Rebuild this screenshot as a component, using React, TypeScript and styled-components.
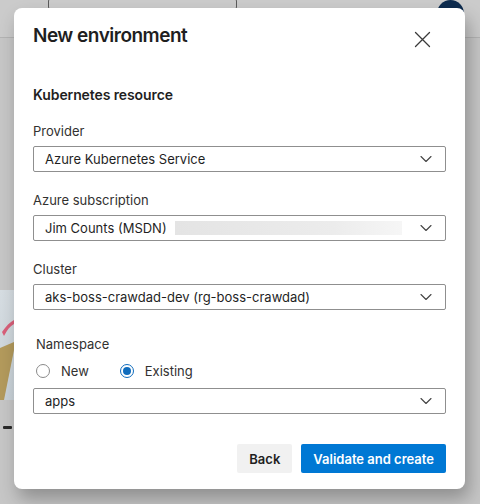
import React from 'react'
import styled, { createGlobalStyle } from 'styled-components'

const GlobalStyle = createGlobalStyle`
  html, body {
    margin: 0;
    padding: 0;
  }
  body {
    font-family: Inter, "Noto Sans", "Liberation Sans", sans-serif;
    color: #1f1f1f;
    -webkit-font-smoothing: antialiased;
  }
`

const Page = styled.div`
  position: relative;
  width: 480px;
  height: 504px;
  overflow: hidden;
  background: #c6c6c6;
`

const TopBar = styled.div`
  display: flex;
  align-items: flex-start;
  justify-content: space-between;
  height: 38px;
  padding: 0 16px 0 48px;
  box-sizing: border-box;
  background: #cbcbcb;
  border-bottom: 1px solid #b3b3b3;
`

const SearchBox = styled.div`
  width: 187px;
  height: 10px;
  margin-top: -2px;
  border: 1px solid #5a5a5a;
  border-radius: 3px;
`

const Avatar = styled.div`
  width: 27px;
  height: 27px;
  border-radius: 50%;
  background: #0d2b4e;
`

const Behind = styled.div`
  display: flex;
  flex-direction: column;
  padding-top: 252px;
  gap: 26px;
`

const Thumb = styled.div`
  width: 14px;
  height: 110px;
  background: linear-gradient(180deg, #d6dde2, #c9d2d8);
  overflow: hidden;
`

const ThumbCaption = styled.div`
  width: 9px;
  height: 3px;
  margin-left: 3px;
  background: #2a2a2a;
  border-radius: 1px;
`

const Dialog = styled.div`
  position: absolute;
  left: 14px;
  top: 8px;
  width: 451px;
  height: 481px;
  box-sizing: border-box;
  background: #fff;
  border-radius: 8px;
  box-shadow: 4px 10px 18px rgba(0, 0, 0, 0.28);
  padding: 14px 19px 16px 19px;
  display: flex;
  flex-direction: column;
`

const Header = styled.div`
  display: flex;
  align-items: flex-start;
  justify-content: space-between;
`

const Title = styled.h1`
  margin: 0;
  font-size: 19px;
  line-height: 28px;
  font-weight: 600;
  letter-spacing: -0.5px;
  color: #1f1f1f;
`

const CloseButton = styled.button`
  border: 0;
  background: none;
  padding: 0;
  margin: 9px 15px 0 0;
  width: 17px;
  height: 17px;
  display: flex;
  cursor: pointer;
`

const Section = styled.h2`
  margin: 35px 0 0 0;
  font-size: 14px;
  line-height: 20px;
  font-weight: 600;
  letter-spacing: -0.1px;
  color: #1f1f1f;
`

const Field = styled.div<{ $top?: number }>`
  display: flex;
  flex-direction: column;
  margin-top: ${({ $top }) => $top ?? 15}px;
`

const Label = styled.label<{ $indent?: number }>`
  font-size: 13px;
  line-height: 20px;
  color: #323130;
  margin: 0 0 5px ${({ $indent }) => $indent ?? 0}px;
`

const Select = styled.div`
  display: flex;
  align-items: center;
  height: 26px;
  box-sizing: border-box;
  border: 1px solid #8f8f8f;
  border-radius: 2px;
  padding: 0 13px 0 11px;
  font-size: 13px;
  color: #1f1f1f;
  gap: 4px;
`

const SelectText = styled.span`
  white-space: nowrap;
`

const Redacted = styled.span`
  flex: 1;
  height: 14px;
  margin: 0 14px 0 4px;
  background: linear-gradient(90deg, #e4e4e4, #ececec 70%, #f6f6f6);
  filter: blur(0.5px);
`

const Spacer = styled.span`
  flex: 1;
`

const RadioRow = styled.div`
  display: flex;
  align-items: center;
  gap: 31px;
  margin: 2px 0 7px 3px;
`

const RadioOption = styled.label`
  display: flex;
  align-items: center;
  gap: 11px;
  font-size: 13px;
  line-height: 20px;
  color: #323130;
`

const RadioDot = styled.span<{ $checked?: boolean }>`
  width: 14px;
  height: 14px;
  box-sizing: border-box;
  border-radius: 50%;
  border: 1px solid ${({ $checked }) => ($checked ? '#0f6cbd' : '#8a8a8a')};
  display: flex;
  align-items: center;
  justify-content: center;
  background: #fff;

  &::after {
    content: '';
    display: ${({ $checked }) => ($checked ? 'block' : 'none')};
    width: 8px;
    height: 8px;
    border-radius: 50%;
    background: #0f6cbd;
  }
`

const Footer = styled.div`
  margin-top: auto;
  display: flex;
  justify-content: flex-end;
  gap: 9px;
`

const Button = styled.button<{ $primary?: boolean }>`
  height: 29px;
  border: 0;
  border-radius: 2px;
  padding: 0 12px;
  font-family: inherit;
  font-size: 13px;
  font-weight: 600;
  background: ${({ $primary }) => ($primary ? '#0078d4' : '#f1f1f1')};
  color: ${({ $primary }) => ($primary ? '#fff' : '#1f1f1f')};
  cursor: pointer;
`

const Chevron = () => (
  <svg width="12" height="8" viewBox="0 0 12 8" fill="none">
    <path d="M1 1.5l5 5 5-5" stroke="#444" strokeWidth="1.1" strokeLinecap="round" strokeLinejoin="round" />
  </svg>
)

const CloseIcon = () => (
  <svg width="17" height="17" viewBox="0 0 17 17" fill="none">
    <path d="M1.5 1.5l14 14M15.5 1.5l-14 14" stroke="#3a3a3a" strokeWidth="1.3" strokeLinecap="round" />
  </svg>
)

const Dropdown: React.FC<{ value: string; redacted?: boolean }> = ({ value, redacted }) => (
  <Select>
    <SelectText>{value}</SelectText>
    {redacted ? <Redacted /> : <Spacer />}
    <Chevron />
  </Select>
)

export default function App() {
  return (
    <>
      <GlobalStyle />
      <Page>
        <TopBar>
          <SearchBox />
          <Avatar />
        </TopBar>
        <Behind>
          <Thumb>
            <svg width="14" height="110" viewBox="0 0 14 110">
              <path d="M0 58 L14 52 L14 60 L4 110 L0 110 Z" fill="#b39a5c" />
              <path d="M2 42 C6 36 10 32 14 30 L14 34 C10 36 7 40 4 46 Z" fill="#d9607a" />
            </svg>
          </Thumb>
          <ThumbCaption />
        </Behind>

        <Dialog>
          <Header>
            <Title>New environment</Title>
            <CloseButton aria-label="Close">
              <CloseIcon />
            </CloseButton>
          </Header>

          <Section>Kubernetes resource</Section>

          <Field $top={16}>
            <Label>Provider</Label>
            <Dropdown value="Azure Kubernetes Service" />
          </Field>

          <Field $top={18}>
            <Label>Azure subscription</Label>
            <Dropdown value="Jim Counts (MSDN)" redacted />
          </Field>

          <Field $top={18}>
            <Label>Cluster</Label>
            <Dropdown value="aks-boss-crawdad-dev (rg-boss-crawdad)" />
          </Field>

          <Field $top={24}>
            <Label $indent={3}>Namespace</Label>
            <RadioRow>
              <RadioOption>
                <RadioDot />
                New
              </RadioOption>
              <RadioOption>
                <RadioDot $checked />
                Existing
              </RadioOption>
            </RadioRow>
            <Dropdown value="apps" />
          </Field>

          <Footer>
            <Button>Back</Button>
            <Button $primary>Validate and create</Button>
          </Footer>
        </Dialog>
      </Page>
    </>
  )
}
